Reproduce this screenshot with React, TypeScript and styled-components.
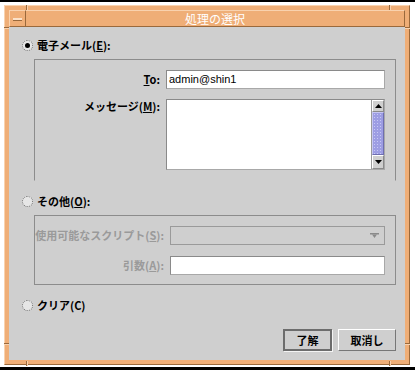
import styled, { createGlobalStyle } from "styled-components"

const GlobalStyle = createGlobalStyle`
  html, body {
    margin: 0;
    padding: 0;
    background: #ffffff;
  }
  * {
    box-sizing: border-box;
  }
`

const jp = `"Noto Sans CJK JP", "Liberation Sans", sans-serif`

const Page = styled.div`
  width: 415px;
  height: 370px;
  background: #ffffff;
  display: flex;
  flex-direction: column;
  font-family: ${jp};
`

const Rule = styled.div<{ $h: number; $mt: number }>`
  height: ${({ $h }) => $h}px;
  margin-top: ${({ $mt }) => $mt}px;
  background: #000000;
  flex-shrink: 0;
`

const Frame = styled.div`
  position: relative;
  margin: 3px 5px 0 4px;
  height: 360px;
  padding: 4px;
  background: #efae77;
  border: 1px solid;
  border-color: #f9d2ae #9a693c #9a693c #f9d2ae;
  display: flex;
  flex-direction: column;
  flex-shrink: 0;
`

const Notch = styled.span<{ $vertical?: boolean }>`
  position: absolute;
  background: #9a693c;
  box-shadow: ${({ $vertical }) =>
    $vertical ? "1px 0 0 #f9d2ae" : "0 1px 0 #f9d2ae"};
  width: ${({ $vertical }) => ($vertical ? "1px" : "5px")};
  height: ${({ $vertical }) => ($vertical ? "5px" : "1px")};
`

const TitleBar = styled.div`
  height: 17px;
  display: flex;
  background: #efae77;
  border: 1px solid;
  border-color: #f9d2ae #9a693c #9a693c #f9d2ae;
`

const MenuButton = styled.div`
  width: 17px;
  margin: -1px 0 -1px -1px;
  border: 1px solid;
  border-color: #f9d2ae #9a693c #9a693c #f9d2ae;
  display: flex;
  align-items: center;
  justify-content: center;
`

const Dash = styled.span`
  width: 9px;
  height: 2px;
  background: #fbe1c8;
  box-shadow: 0 1px 0 #9a693c;
`

const Title = styled.div`
  flex: 1;
  text-align: center;
  color: #ffffff;
  font-size: 12px;
  line-height: 15px;
`

const Content = styled.div`
  flex: 1;
  background: #cfcfcf;
  display: flex;
  flex-direction: column;
  padding: 11px 9px 9px 13px;
`

const RadioRow = styled.label<{ $mt?: number }>`
  display: flex;
  align-items: center;
  gap: 4px;
  height: 14px;
  margin-top: ${({ $mt }) => $mt ?? 0}px;
  font-size: 11px;
  font-weight: bold;
  color: #000000;
`

const RadioCircle = styled.span<{ $checked?: boolean }>`
  width: 11px;
  height: 11px;
  border-radius: 50%;
  border: 1px dotted #6f6f6f;
  background: #e6e6e6;
  display: flex;
  align-items: center;
  justify-content: center;

  &::after {
    content: "";
    width: 5px;
    height: 5px;
    border-radius: 50%;
    background: ${({ $checked }) => ($checked ? "#000000" : "transparent")};
  }
`

const Group = styled.div<{ $open?: boolean; $cols: number; $rows: string; $gap: number }>`
  margin: 7px 0 0 12px;
  border: 1px solid #8c8c8c;
  border-bottom-color: ${({ $open }) => ($open ? "transparent" : "#8c8c8c")};
  padding: 10px 10px ${({ $open }) => ($open ? 10 : 9)}px 0;
  display: grid;
  grid-template-columns: ${({ $cols }) => $cols}px 1fr;
  grid-template-rows: ${({ $rows }) => $rows};
  column-gap: 6px;
  row-gap: ${({ $gap }) => $gap}px;
`

const FieldLabel = styled.div<{ $disabled?: boolean; $top?: boolean }>`
  text-align: right;
  font-size: 11px;
  font-weight: bold;
  line-height: 15px;
  color: ${({ $disabled }) => ($disabled ? "#9a9a9a" : "#000000")};
  align-self: ${({ $top }) => ($top ? "start" : "center")};
  padding-top: ${({ $top }) => ($top ? "0" : "0")};
  white-space: nowrap;
`

const TextInput = styled.div`
  height: 19px;
  border: 1px solid;
  border-color: #8a8a8a #a8a8a8 #a8a8a8 #8a8a8a;
  background: #ffffff;
  font-family: "Liberation Sans", sans-serif;
  font-size: 11px;
  line-height: 17px;
  padding-left: 2px;
  color: #000000;
`

const TextAreaBox = styled.div`
  height: 71px;
  border: 1px solid;
  border-color: #8a8a8a #a8a8a8 #a8a8a8 #8a8a8a;
  background: #ffffff;
  display: flex;
`

const TextBody = styled.div`
  flex: 1;
`

const ScrollBar = styled.div`
  width: 13px;
  border-left: 1px solid #9a9a9a;
  display: flex;
  flex-direction: column;
  background: #cfcfcf;
`

const ScrollButton = styled.div<{ $h: number }>`
  height: ${({ $h }) => $h}px;
  border: 1px solid;
  border-color: #ffffff #8a8a8a #8a8a8a #ffffff;
  display: flex;
  align-items: center;
  justify-content: center;
`

const Thumb = styled.div`
  flex: 1;
  background-color: #9d9de3;
  background-image: radial-gradient(#c8c8f4 0.6px, transparent 0.8px);
  background-size: 3px 3px;
  border: 1px solid;
  border-color: #c6c6f3 #6e6eb0 #6e6eb0 #c6c6f3;
`

const Combo = styled.div`
  height: 19px;
  border: 1px solid #9a9a9a;
  background: #cfcfcf;
  display: flex;
  align-items: center;
  justify-content: flex-end;
  padding-right: 5px;
`

const ButtonRow = styled.div`
  margin-top: auto;
  display: flex;
  justify-content: flex-end;
  gap: 6px;
`

const Button = styled.button<{ $default?: boolean; $w: number }>`
  width: ${({ $w }) => $w}px;
  height: 22px;
  padding: 0;
  background: #cfcfcf;
  font-family: ${jp};
  font-size: 11px;
  font-weight: bold;
  color: #000000;
  border: ${({ $default }) => ($default ? "2px solid #6d6d6d" : "1px solid")};
  border-color: ${({ $default }) =>
    $default ? "#6d6d6d" : "#ffffff #777777 #777777 #ffffff"};
  box-shadow: ${({ $default }) => ($default ? "1px 1px 0 #f4f4f4" : "none")};
`

const Caret = ({ up }: { up?: boolean }) => (
  <svg width="7" height="4" viewBox="0 0 7 4">
    <path d={up ? "M0 4 L3.5 0 L7 4 Z" : "M0 0 L7 0 L3.5 4 Z"} fill="#000" />
  </svg>
)

const ComboArrow = () => (
  <svg width="9" height="5" viewBox="0 0 9 5">
    <rect x="0" y="0" width="9" height="1.5" fill="#8a8a8a" />
    <path d="M2 1.5 L7 1.5 L4.5 5 Z" fill="#8a8a8a" />
  </svg>
)

export default function App() {
  return (
    <Page>
      <GlobalStyle />
      <Rule $h={2} $mt={0} />
      <Frame>
        <Notch $vertical style={{ left: 21, top: -1 }} />
        <Notch $vertical style={{ left: 384, top: -1 }} />
        <Notch $vertical style={{ left: 21, top: 355 }} />
        <Notch $vertical style={{ left: 384, top: 355 }} />
        <Notch style={{ left: -1, top: 21 }} />
        <Notch style={{ left: 400, top: 21 }} />
        <Notch style={{ left: -1, top: 337 }} />
        <Notch style={{ left: 400, top: 337 }} />
        <TitleBar>
          <MenuButton>
            <Dash />
          </MenuButton>
          <Title>処理の選択</Title>
        </TitleBar>
        <Content>
          <RadioRow>
            <RadioCircle $checked />
            <span>
              電子メール(<u>E</u>):
            </span>
          </RadioRow>
          <Group $open $cols={125} $rows="19px 71px" $gap={10}>
            <FieldLabel>
              <u>T</u>o:
            </FieldLabel>
            <TextInput>admin@shin1</TextInput>
            <FieldLabel $top>
              メッセージ(<u>M</u>):
            </FieldLabel>
            <TextAreaBox>
              <TextBody />
              <ScrollBar>
                <ScrollButton $h={12}>
                  <Caret up />
                </ScrollButton>
                <Thumb />
                <ScrollButton $h={14}>
                  <Caret />
                </ScrollButton>
              </ScrollBar>
            </TextAreaBox>
          </Group>
          <RadioRow $mt={13}>
            <RadioCircle />
            <span>
              その他(<u>O</u>):
            </span>
          </RadioRow>
          <Group $cols={129} $rows="19px 19px" $gap={11}>
            <FieldLabel $disabled>
              使用可能なスクリプト(<u>S</u>):
            </FieldLabel>
            <Combo>
              <ComboArrow />
            </Combo>
            <FieldLabel $disabled>
              引数(<u>A</u>):
            </FieldLabel>
            <TextInput />
          </Group>
          <RadioRow $mt={13}>
            <RadioCircle />
            <span>クリア(C)</span>
          </RadioRow>
          <ButtonRow>
            <Button $default $w={49}>
              了解
            </Button>
            <Button $w={58}>取消し</Button>
          </ButtonRow>
        </Content>
      </Frame>
      <Rule $h={3} $mt={2} />
    </Page>
  )
}
